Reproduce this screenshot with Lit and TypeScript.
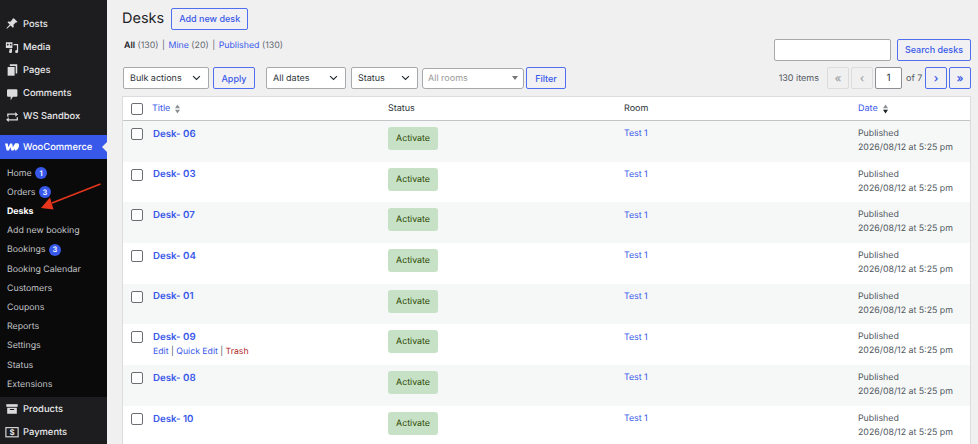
import { LitElement, css, html, nothing, svg } from "lit";
import { customElement } from "lit/decorators.js";

type TopItem = { label: string; icon: unknown };
type SubItem = { label: string; badge?: number; current?: boolean };
type Desk = { name: string; actions?: boolean };

const topItems: TopItem[] = [
  {
    label: "Posts",
    icon: svg`<path d="M10.400 1.600l4 4-1.100.7-.7-.3-2.900 2.800.3 2.500-1 1-2.700-2.700L2.600 13l-.9.3.3-.9 3.400-3.700-2.600-2.700 1-1 2.400.3L9 2l-.3-.7z"/>`
  },
  {
    label: "Media",
    icon: svg`<path fill-rule="evenodd" d="M1 2.500h7.500v6.500H1zM3.200 4.200a1 1 0 1 0 0 2 1 1 0 0 0 0-2zM6.500 4.200a1 1 0 1 0 0 2 1 1 0 0 0 0-2z"/><path d="M9.800 4.500h5.200v8.800a1.700 1.700 0 1 1-1.400-1.700V6H9.800zM5 10h3v3.300A1.700 1.700 0 1 1 6.600 11.600V11H5z"/>`
  },
  {
    label: "Pages",
    icon: svg`<path d="M5.500 1.500h8.500v10.500h-1.800V3.300H5.500z"/><path d="M3 4.500h8v10H3z"/>`
  },
  {
    label: "Comments",
    icon: svg`<path d="M3.500 2.500h9.500a1.200 1.200 0 0 1 1.200 1.200v6.300a1.200 1.200 0 0 1-1.200 1.200H9L6.500 15v-3.800h-3a1.200 1.200 0 0 1-1.200-1.200V3.700a1.200 1.200 0 0 1 1.200-1.200z"/>`
  },
  {
    label: "WS Sandbox",
    icon: svg`<path d="M2.500 4h9.300V2.300l3 2.700-3 2.700V5.500H4v2.200H2.500zM13.300 8.300h1.500V12H4.300v1.700l-3-2.700 3-2.700v2.200h9z"/>`
  }
];

const subItems: SubItem[] = [
  { label: "Home", badge: 1 },
  { label: "Orders", badge: 3 },
  { label: "Desks", current: true },
  { label: "Add new booking" },
  { label: "Bookings", badge: 3 },
  { label: "Booking Calendar" },
  { label: "Customers" },
  { label: "Coupons" },
  { label: "Reports" },
  { label: "Settings" },
  { label: "Status" },
  { label: "Extensions" }
];

const desks: Desk[] = [
  { name: "Desk- 06" },
  { name: "Desk- 03" },
  { name: "Desk- 07" },
  { name: "Desk- 04" },
  { name: "Desk- 01" },
  { name: "Desk- 09", actions: true },
  { name: "Desk- 08" },
  { name: "Desk- 10" }
];

@customElement("app-root")
export class AppRoot extends LitElement {
  private menuIcon(icon: unknown) {
    return html`<svg class="menu-icon" viewBox="0 0 16 16" fill="currentColor">${icon}</svg>`;
  }

  private renderSidebar() {
    return html`
      <aside class="sidebar">
        <ul class="top-menu">
          ${topItems.map(
            (item) => html`<li class="menu-row">${this.menuIcon(item.icon)}<span>${item.label}</span></li>`
          )}
        </ul>
        <div class="menu-row woo">
          <svg class="woo-logo" viewBox="0 0 16 9" fill="currentColor">
            <path d="M0 .6h3.100l.7 4.200L6 .6h2.200l.8 4.200L11.400.6c1.600-.5 4.400-.7 4.600 1.400.2 2.400-1.400 6.400-3.600 6.400-1 0-1.300-.8-1.200-1.800L9.700 8.400H7.300l-.9-3.500-2 3.500H1.900z"/>
          </svg>
          <span>WooCommerce</span>
        </div>
        <ul class="sub-menu">
          ${subItems.map(
            (item) => html`
              <li class=${item.current ? "current" : ""}>
                <span>${item.label}</span>
                ${item.badge ? html`<b class="badge">${item.badge}</b>` : nothing}
              </li>
            `
          )}
        </ul>
        <ul class="bottom-menu">
          <li class="menu-row">
            ${this.menuIcon(svg`<path d="M1.500 2.500h13v3h-13z"/><path fill-rule="evenodd" d="M2.500 6.500h11v7h-11zM5.500 8v1h5V8z"/>`)}
            <span>Products</span>
          </li>
          <li class="menu-row">
            <svg class="menu-icon" viewBox="0 0 16 16">
              <rect x="1" y="3" width="14" height="10.500" fill="none" stroke="currentColor" stroke-width="1.300"/>
              <text x="8" y="11.600" text-anchor="middle" font-size="9" font-weight="700" fill="currentColor">$</text>
            </svg>
            <span>Payments</span>
          </li>
        </ul>
      </aside>
    `;
  }

  private sortArrows(active = false) {
    return html`
      <svg class="sort" viewBox="0 0 8 12">
        <path d="M4 0.500L7 5H1z" fill="#8c8f94"/>
        <path d="M4 11.500L1 7h6z" fill=${active ? "#1d2327" : "#8c8f94"}/>
      </svg>
    `;
  }

  private chevron() {
    return html`
      <svg class="chevron" viewBox="0 0 10 6">
        <path d="M1.200 1l3.800 3.600L8.800 1" fill="none" stroke="#1d2327" stroke-width="1.200"/>
      </svg>
    `;
  }

  private renderToolbar() {
    return html`
      <div class="toolbar">
        <div class="select bulk">Bulk actions${this.chevron()}</div>
        <button class="btn apply">Apply</button>
        <div class="select dates">All dates${this.chevron()}</div>
        <div class="select status">Status${this.chevron()}</div>
        <div class="rooms">All rooms<i class="caret"></i></div>
        <button class="btn filter">Filter</button>
        <div class="pager">
          <span class="count">130 items</span>
          <span class="page off">«</span>
          <span class="page off">‹</span>
          <span class="page-input">1</span>
          <span class="of">of 7</span>
          <span class="page">›</span>
          <span class="page">»</span>
        </div>
      </div>
    `;
  }

  private renderTable() {
    return html`
      <div class="table">
        <div class="head grid">
          <div class="cell-check"><span class="check"></span></div>
          <div class="link sortable">Title ${this.sortArrows()}</div>
          <div>Status</div>
          <div>Room</div>
          <div class="link sortable">Date ${this.sortArrows(true)}</div>
        </div>
        ${desks.map(
          (desk) => html`
            <div class="row grid">
              <div class="cell-check"><span class="check"></span></div>
              <div>
                <div class="desk-name">${desk.name}</div>
                ${desk.actions
                  ? html`<div class="row-actions">
                      <span class="link">Edit</span> | <span class="link">Quick Edit</span> |
                      <span class="trash">Trash</span>
                    </div>`
                  : nothing}
              </div>
              <div><span class="activate">Activate</span></div>
              <div class="link room">Test 1</div>
              <div class="date">Published<br />2026/08/12 at 5:25 pm</div>
            </div>
          `
        )}
      </div>
    `;
  }

  protected render() {
    return html`
      <div class="page-wrap">
        ${this.renderSidebar()}
        <main class="content">
          <div class="title-row">
            <h1>Desks</h1>
            <button class="btn add">Add new desk</button>
          </div>
          <div class="filter-row">
            <div class="views">
              <b>All</b><span class="muted">(130)</span>
              <span class="sep">|</span>
              <span class="link">Mine</span><span class="muted">(20)</span>
              <span class="sep">|</span>
              <span class="link">Published</span><span class="muted">(130)</span>
            </div>
            <div class="search">
              <span class="search-input"></span>
              <button class="btn search-btn">Search desks</button>
            </div>
          </div>
          ${this.renderToolbar()} ${this.renderTable()}
        </main>
        <svg class="arrow" viewBox="0 0 978 444" width="978" height="444">
          <path d="M100.500 184L52 203" stroke="#e7361c" stroke-width="1.500" fill="none"/>
          <path d="M41 208L50 197.500L53.500 209.500z" fill="#e7361c"/>
        </svg>
      </div>
    `;
  }

  static styles = css`
    :host {
      display: block;
      font-family: Inter, "Liberation Sans", sans-serif;
      font-size: 9px;
      color: #3c434a;
      text-rendering: geometricPrecision;
    }

    * {
      box-sizing: border-box;
    }

    ul {
      list-style: none;
      margin: 0;
      padding: 0;
    }

    .page-wrap {
      position: relative;
      display: flex;
      width: 978px;
      height: 444px;
      overflow: hidden;
      background: #f0f0f1;
    }

    .sidebar {
      flex: 0 0 107px;
      display: flex;
      flex-direction: column;
      background: #1d1d1f;
      color: #f0f0f1;
    }

    .top-menu {
      padding-top: 12.500px;
      padding-bottom: 7px;
    }

    .menu-row {
      display: flex;
      align-items: center;
      gap: 4px;
      height: 23.200px;
      padding-left: 4px;
      font-size: 9.400px;
      font-weight: 500;
      color: #e8e8ea;
    }

    .menu-icon {
      flex: none;
      width: 14px;
      height: 14px;
      color: #dcdcde;
      margin-left: 1px;
    }

    .menu-row.woo {
      position: relative;
      height: 24px;
      background: #3858e9;
      color: #fff;
      gap: 4px;
    }

    .woo::after {
      content: "";
      position: absolute;
      right: 0;
      top: 7px;
      border: 5px solid transparent;
      border-right-color: #f0f0f1;
      border-left-width: 0;
    }

    .woo-logo {
      flex: none;
      width: 14px;
      height: 8px;
      margin-left: 1px;
    }

    .sub-menu {
      flex: none;
      height: 238px;
      padding: 4.200px 0 0 7px;
      background: #0a0a0b;
      font-size: 8.800px;
      color: #c3c4c7;
    }

    .sub-menu li {
      display: flex;
      align-items: center;
      gap: 3.500px;
      height: 19.200px;
    }

    .sub-menu .current {
      color: #fff;
      font-weight: 700;
    }

    .badge {
      display: inline-flex;
      align-items: center;
      justify-content: center;
      width: 12px;
      height: 12px;
      border-radius: 50%;
      background: #3858e9;
      color: #fff;
      font-size: 7.500px;
      font-weight: 600;
    }

    .content {
      flex: 1;
      min-width: 0;
      padding: 7px 7px 0 15px;
    }

    .title-row {
      display: flex;
      align-items: center;
      gap: 7px;
      height: 23px;
    }

    h1 {
      margin: 0;
      font-size: 14.500px;
      font-weight: 400;
      color: #1d2327;
    }

    .btn {
      font: inherit;
      height: 22px;
      padding: 0;
      border: 1px solid #4f6ff0;
      border-radius: 2px;
      background: #f1f1f3;
      color: #3858e9;
      font-weight: 500;
    }

    .add {
      width: 77px;
    }

    .filter-row {
      display: flex;
      justify-content: space-between;
      height: 28px;
    }

    .views {
      display: flex;
      gap: 2.500px;
      padding-top: 9.500px;
      padding-left: 2px;
      font-size: 8.800px;
    }

    .views b {
      color: #1d2327;
      font-weight: 600;
    }

    .muted,
    .sep {
      color: #646970;
    }

    .sep {
      margin: 0 1px;
    }

    .link {
      color: #3858e9;
    }

    .search {
      display: flex;
      gap: 6px;
      margin-top: 8.500px;
      height: 22px;
    }

    .search-input {
      width: 117px;
      height: 22px;
      border: 1px solid #a7aaad;
      border-radius: 2px;
      background: #fff;
    }

    .search-btn {
      width: 74px;
    }

    .toolbar {
      display: flex;
      align-items: center;
      height: 22px;
      margin: 9px 0 7px;
      padding-left: 1px;
    }

    .select {
      display: flex;
      align-items: center;
      justify-content: space-between;
      height: 22px;
      padding: 0 7px 0 6px;
      border: 1px solid #a7aaad;
      border-radius: 2px;
      background: #fff;
      color: #2c3338;
    }

    .bulk {
      width: 86px;
      margin-right: 4px;
    }

    .dates {
      width: 80px;
      margin-right: 5px;
    }

    .status {
      width: 67px;
      margin-right: 4px;
    }

    .chevron {
      width: 9px;
      height: 6px;
    }

    .apply {
      width: 42px;
      margin-right: 11px;
    }

    .rooms {
      position: relative;
      width: 102px;
      height: 21px;
      line-height: 19px;
      padding-left: 5px;
      margin-right: 2px;
      border: 1px solid #a7aaad;
      border-radius: 3px;
      background: #fff;
      color: #999;
    }

    .caret {
      position: absolute;
      right: 5px;
      top: 7px;
      border: 3px solid transparent;
      border-top: 4px solid #777;
      border-bottom: 0;
    }

    .filter {
      width: 40px;
    }

    .pager {
      margin-left: auto;
      display: flex;
      align-items: center;
      gap: 2px;
    }

    .count {
      margin-right: 6px;
      color: #50575e;
    }

    .page,
    .page-input {
      display: flex;
      align-items: center;
      justify-content: center;
      width: 22px;
      height: 22px;
      border: 1px solid #4f6ff0;
      border-radius: 2px;
      background: #f1f1f3;
      color: #3858e9;
      font-size: 11px;
      font-weight: 600;
    }

    .page.off {
      border-color: #dcdcde;
      background: #f0f0f1;
      color: #a7aaad;
    }

    .page-input {
      width: 27px;
      border-color: #8c8f94;
      background: #fff;
      color: #2c3338;
      font-size: 10px;
      font-weight: 400;
    }

    .of {
      width: 15px;
      margin: 0 2px;
      white-space: nowrap;
      color: #50575e;
    }

    .table {
      width: 849px;
      border: 1px solid #dcdcde;
      border-width: 1px 1px 0;
      background: #fff;
    }

    .grid {
      display: grid;
      grid-template-columns: 29px 236px 236px 234px 1fr;
    }

    .head {
      height: 24px;
      align-items: center;
      border-bottom: 1px solid #c3c4c7;
      color: #2c3338;
    }

    .cell-check {
      padding-left: 8px;
      display: flex;
    }

    .check {
      display: block;
      width: 12px;
      height: 12px;
      border: 1px solid #6b6e73;
      border-radius: 2px;
      background: #fff;
    }

    .sortable {
      display: flex;
      align-items: center;
      gap: 4px;
    }

    .sort {
      width: 7px;
      height: 10px;
    }

    .row {
      height: 40.700px;
      padding-top: 6px;
      background: #fff;
    }

    .row:nth-child(even) {
      background: #f6f7f7;
    }

    .row .cell-check {
      padding-top: 1px;
    }

    .desk-name {
      color: #3858e9;
      font-size: 9.700px;
      font-weight: 600;
      line-height: 13px;
      padding-top: 0.700px;
      padding-left: 1px;
    }

    .row-actions {
      margin-top: 3px;
      padding-left: 1px;
      font-size: 8.700px;
      color: #50575e;
    }

    .trash {
      color: #b32d2e;
    }

    .activate {
      display: inline-flex;
      align-items: center;
      justify-content: center;
      width: 50px;
      height: 23px;
      border-radius: 3px;
      background: #c6e1c6;
      color: #2c4700;
      font-size: 8.800px;
    }

    .room {
      font-size: 8.800px;
      padding-top: 1.300px;
    }

    .date {
      font-size: 8.800px;
      line-height: 14px;
      color: #50575e;
    }

    .arrow {
      position: absolute;
      left: 0;
      top: 0;
      pointer-events: none;
    }
  `;
}
